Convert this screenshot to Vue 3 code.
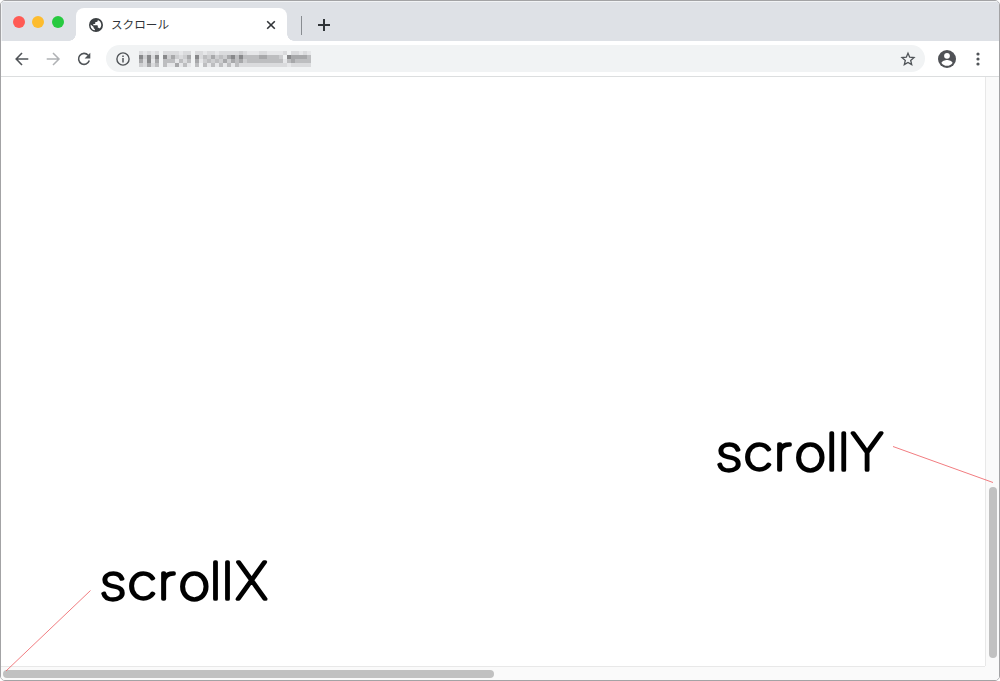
<script setup>
const rows = [
  '2121202222122022122122222321112211112022121',
  '6362606353235062435343564644445544430655554',
  '5261504441424051343435354534444444441454444',
  '3252404115141040414141414222222222222122222',
].map((row) => row.split(''))
const shades = ['#f1f3f4', '#e6e7e9', '#dadbdd', '#cdced0', '#bdbec0', '#a7a8aa', '#88898b']
</script>

<template>
  <div class="window">
    <header class="tabs">
      <div class="lights"><i class="red"></i><i class="yellow"></i><i class="green"></i></div>
      <div class="tab">
        <svg class="globe" width="14" height="14" viewBox="0 0 14 14"><circle cx="7" cy="7" r="7" fill="#3c4043"/><path d="M1.700 6.400l2.900 2.700v.9l1.300 1.300v1C2.900 11.800 1.200 9.100 1.700 6.400zM8.800 2v.6C8.800 3.400 8.300 4 7.500 4H6.300v1.300c0 .4-.3.7-.7.7H4.300v1.300h3.800c.4 0 .7.3.7.7v1.800h.7c.6 0 1 .3 1.200.8C13.500 8 12.500 3.500 8.800 2z" fill="#fff"/></svg>
        <span class="title">スクロール</span>
        <svg class="close" width="10" height="10" viewBox="0 0 10 10"><path d="M1.200 1.200l7.600 7.600M8.800 1.200L1.200 8.800" stroke="#303438" stroke-width="1.600"/></svg>
      </div>
      <span class="divider"></span>
      <svg class="plus" width="14" height="14" viewBox="0 0 14 14"><path d="M7 1v12M1 7h12" stroke="#303438" stroke-width="2"/></svg>
    </header>
    <nav class="toolbar">
      <svg class="nav" width="16" height="16" viewBox="0 0 16 16" fill="none" stroke="#505458" stroke-width="1.600"><path d="M14.300 8H2.600M8 2L2.200 8l5.800 6"/></svg>
      <svg class="nav" width="16" height="16" viewBox="0 0 16 16" fill="none" stroke="#b0b2b5" stroke-width="1.500"><path d="M1.700 8h11.800M8 2l6 6-6 6"/></svg>
      <svg class="nav" width="16" height="16" viewBox="0 0 16 16"><path d="M12.200 4.200A5.500 5.500 0 1 0 13.300 9.600" fill="none" stroke="#505458" stroke-width="1.600"/><path d="M14.300 1.700v5.700H8.600z" fill="#505458"/></svg>
      <div class="address">
        <svg class="info" width="14" height="14" viewBox="0 0 14 14"><circle cx="7" cy="7" r="6.100" fill="none" stroke="#505458" stroke-width="1.400"/><path d="M7 6.100v4.400M7 3.500V5" stroke="#505458" stroke-width="1.500"/></svg>
        <div class="mosaic"><template v-for="(row, r) in rows" :key="r"><b v-for="(v, c) in row" :key="c" :style="{ background: shades[v] }"></b></template></div>
        <svg class="star" width="16" height="16" viewBox="0 0 16 16"><path d="M8 2.200l1.700 4 4.300.4-3.300 2.800 1 4.200L8 11.400l-3.700 2.200 1-4.200L2 6.600l4.300-.4z" fill="none" stroke="#505458" stroke-width="1.300"/></svg>
      </div>
      <svg class="profile" width="18" height="18" viewBox="0 0 18 18"><circle cx="9" cy="9" r="9" fill="#505256"/><circle cx="9" cy="5.800" r="2.900" fill="#fff"/><path d="M3.500 12.900c.2-2 3.600-3 5.500-3s5.300 1 5.500 3C13.300 14.700 11.300 15.800 9 15.800s-4.300-1.100-5.500-2.900z" fill="#fff"/></svg>
      <svg class="more" width="4" height="14" viewBox="0 0 4 14" fill="#505458"><circle cx="2" cy="2" r="1.600"/><circle cx="2" cy="7" r="1.600"/><circle cx="2" cy="12" r="1.600"/></svg>
    </nav>
    <main>
      <div class="page"></div>
      <div class="track-y"><div class="thumb-y"></div></div>
      <div class="track-x"><div class="thumb-x"></div></div>
    </main>
    <svg class="notes" width="1000" height="681" viewBox="0 0 1000 681">
      <path d="M893 446.500L993 482.500M90.500 590.500L6 671" fill="none" stroke="#ee5a60" stroke-width=".8"/>
      <g transform="translate(715.500 469.500)">
        <text class="round" transform="scale(1.150 1)" x="0 24.300 50.600 68.700">scro</text>
        <text x="110.800 122.800 135.200">llY</text>
      </g>
      <g transform="translate(99.500 599)">
        <text class="round" transform="scale(1.150 1)" x="0 24.300 50.600 68.700">scro</text>
        <text x="110.500 122.500 136.300">llX</text>
      </g>
    </svg>
  </div>
</template>

<style scoped>
.window { position: relative; box-sizing: border-box; width: 1000px; height: 681px; display: flex; flex-direction: column; border: 1px solid #a3a3a5; border-radius: 5px; overflow: hidden; background: #fff; font-family: "Liberation Sans", "Noto Sans CJK JP", sans-serif; }
.tabs { display: flex; align-items: center; height: 40px; background: #dee1e6; box-shadow: inset 1px 1px #f1f3f5; box-sizing: border-box; flex: none; }
.lights { display: flex; gap: 7.500px; margin-top: 1px; padding-left: 11.500px; width: 63.500px; }
.lights i { width: 12px; height: 12px; border-radius: 50%; }
.red { background: #ff5b55; }
.yellow { background: #fdbc2e; }
.green { background: #27ca40; }
.tab { position: relative; box-sizing: border-box; display: flex; align-items: center; width: 211px; height: 33px; margin-top: 7px; padding: 0 11px 0 13px; background: #fff; border-radius: 8px 8px 0 0; }
.tab::before, .tab::after { content: ""; position: absolute; bottom: 0; width: 7px; height: 7px; }
.tab::before { left: -7px; background: radial-gradient(circle at 0 0, transparent 6.500px, #fff 7px); }
.tab::after { right: -7px; background: radial-gradient(circle at 100% 0, transparent 6.500px, #fff 7px); }
.title { margin: -2px 0 0 8px; font: 11.600px/16px "Noto Sans CJK JP", sans-serif; color: #303438; white-space: nowrap; }
.close { margin-left: auto; }
.divider { width: 1px; height: 19px; margin: 9px 0 0 14px; background: #888c91; }
.plus { margin: 7px 0 0 15px; }
.toolbar { box-sizing: border-box; flex: none; display: flex; align-items: center; height: 36px; padding: 0 19px 0 12.500px; background: #fff; border-bottom: 1px solid #dcdedf; }
.nav { margin-right: 15.300px; flex: none; }
.address { box-sizing: border-box; display: flex; align-items: center; width: 819px; height: 27px; margin-left: -1.400px; padding: 0 9px 0 10px; border-radius: 14px; background: #f1f3f4; }
.mosaic { display: grid; grid-template-columns: repeat(43, 4px); grid-auto-rows: 4px; margin-left: 9px; filter: blur(.4px); }
.star { margin-left: auto; }
.profile { margin-left: 13px; flex: none; }
.more { margin-left: auto; }
main { flex: 1; display: grid; grid-template: 1fr 14px / 1fr 14px; min-height: 0; background: #fafafa; }
.page { background: #fff; }
.track-y { grid-row: 1 / 3; grid-column: 2; border-left: 1px solid #e8e8e8; padding: 410px 2px 0 3px; margin-bottom: 14px; }
.track-x { grid-row: 2; grid-column: 1; border-top: 1px solid #e8e8e8; padding: 3px 0 0 2px; }
.thumb-y { width: 8px; height: 171px; border-radius: 4px; background: #c1c1c1; }
.thumb-x { width: 491px; height: 8px; border-radius: 4px; background: #c1c1c1; }
.notes { position: absolute; left: -1px; top: -1px; pointer-events: none; }
.notes text { font: 100 51px Inter, sans-serif; stroke: #000; stroke-width: 3.700px; stroke-linejoin: round; }
.notes .round { font-size: 47.500px; stroke-width: 3.300px; }
</style>
